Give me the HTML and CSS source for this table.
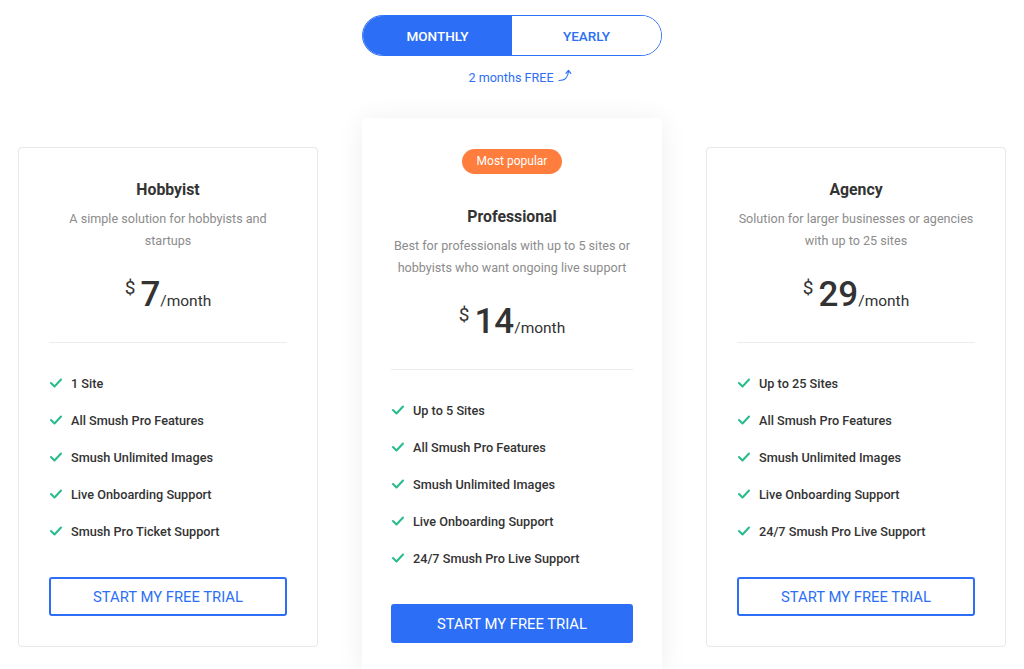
FILE: index.html
```html
<!DOCTYPE html>
<html lang="en">
<head>
<meta charset="utf-8">
<title>Pricing</title>
<link rel="stylesheet" href="styles.css">
</head>
<body>
<div class="page">
  <div class="toggle">
    <button class="toggle-btn active">MONTHLY</button>
    <button class="toggle-btn">YEARLY</button>
  </div>
  <div class="promo">2 months FREE
    <svg class="promo-arrow" width="14" height="13" viewBox="0 0 14 13" fill="none" stroke="#2c6ff6" stroke-width="1.2" stroke-linecap="round" stroke-linejoin="round"><path d="M1 11.5 C6 11.5 10 10 10.5 2"/><path d="M8 4.3 L10.5 1.5 L12.8 4.3"/></svg>
  </div>

  <div class="plans">
    <div class="card side">
      <h2 class="title">Hobbyist</h2>
      <p class="desc">A simple solution for hobbyists and startups</p>
      <div class="price"><span class="cur">$</span><span class="amt">7</span><span class="per">/month</span></div>
      <ul class="features">
        <li><svg class="check" viewBox="0 0 12 10"><polyline points="1,5 4.5,8.5 11,1.5"/></svg>1 Site</li>
        <li><svg class="check" viewBox="0 0 12 10"><polyline points="1,5 4.5,8.5 11,1.5"/></svg>All Smush Pro Features</li>
        <li><svg class="check" viewBox="0 0 12 10"><polyline points="1,5 4.5,8.5 11,1.5"/></svg>Smush Unlimited Images</li>
        <li><svg class="check" viewBox="0 0 12 10"><polyline points="1,5 4.5,8.5 11,1.5"/></svg>Live Onboarding Support</li>
        <li><svg class="check" viewBox="0 0 12 10"><polyline points="1,5 4.5,8.5 11,1.5"/></svg>Smush Pro Ticket Support</li>
      </ul>
      <button class="cta outline">START MY FREE TRIAL</button>
    </div>

    <div class="card featured">
      <span class="badge">Most popular</span>
      <h2 class="title">Professional</h2>
      <p class="desc">Best for professionals with up to 5 sites or hobbyists who want ongoing live support</p>
      <div class="price"><span class="cur">$</span><span class="amt">14</span><span class="per">/month</span></div>
      <ul class="features">
        <li><svg class="check" viewBox="0 0 12 10"><polyline points="1,5 4.5,8.5 11,1.5"/></svg>Up to 5 Sites</li>
        <li><svg class="check" viewBox="0 0 12 10"><polyline points="1,5 4.5,8.5 11,1.5"/></svg>All Smush Pro Features</li>
        <li><svg class="check" viewBox="0 0 12 10"><polyline points="1,5 4.5,8.5 11,1.5"/></svg>Smush Unlimited Images</li>
        <li><svg class="check" viewBox="0 0 12 10"><polyline points="1,5 4.5,8.5 11,1.5"/></svg>Live Onboarding Support</li>
        <li><svg class="check" viewBox="0 0 12 10"><polyline points="1,5 4.5,8.5 11,1.5"/></svg>24/7 Smush Pro Live Support</li>
      </ul>
      <button class="cta solid">START MY FREE TRIAL</button>
    </div>

    <div class="card side">
      <h2 class="title">Agency</h2>
      <p class="desc">Solution for larger businesses or agencies with up to 25 sites</p>
      <div class="price"><span class="cur">$</span><span class="amt">29</span><span class="per">/month</span></div>
      <ul class="features">
        <li><svg class="check" viewBox="0 0 12 10"><polyline points="1,5 4.5,8.5 11,1.5"/></svg>Up to 25 Sites</li>
        <li><svg class="check" viewBox="0 0 12 10"><polyline points="1,5 4.5,8.5 11,1.5"/></svg>All Smush Pro Features</li>
        <li><svg class="check" viewBox="0 0 12 10"><polyline points="1,5 4.5,8.5 11,1.5"/></svg>Smush Unlimited Images</li>
        <li><svg class="check" viewBox="0 0 12 10"><polyline points="1,5 4.5,8.5 11,1.5"/></svg>Live Onboarding Support</li>
        <li><svg class="check" viewBox="0 0 12 10"><polyline points="1,5 4.5,8.5 11,1.5"/></svg>24/7 Smush Pro Live Support</li>
      </ul>
      <button class="cta outline">START MY FREE TRIAL</button>
    </div>
  </div>
</div>
</body>
</html>
```

FILE: styles.css
```css
* { box-sizing: border-box; }
html, body { margin: 0; padding: 0; background: #fff; }
body {
  font-family: Roboto, "Liberation Sans", Arial, sans-serif;
  color: #333;
  overflow: hidden;
}
.page {
  display: flex;
  flex-direction: column;
  align-items: center;
  padding-top: 15px;
}
.toggle {
  display: flex;
  width: 300px;
  height: 41px;
  border: 1.5px solid #2c6ff6;
  border-radius: 21px;
  overflow: hidden;
}
.toggle-btn {
  flex: 1;
  border: 0;
  background: #fff;
  color: #2c6ff6;
  font-family: inherit;
  font-size: 13.5px;
  font-weight: 500;
  padding: 0;
  cursor: pointer;
}
.toggle-btn.active {
  background: #2c6ff6;
  color: #fff;
}
.promo {
  margin-top: 14px;
  height: 16px;
  font-size: 12.6px;
  line-height: 16px;
  color: #2c6ff6;
  display: flex;
  align-items: flex-end;
  gap: 4px;
  padding-left: 16px;
}
.promo-arrow { position: relative; top: -4px; }

.plans {
  display: flex;
  align-items: flex-start;
  gap: 44px;
  width: 988px;
  margin-top: 32px;
}
.card {
  width: 300px;
  flex: 0 0 300px;
  background: #fff;
  border-radius: 4px;
  display: flex;
  flex-direction: column;
  align-items: center;
  text-align: center;
}
.card.side {
  margin-top: 29px;
  border: 1px solid #e8e8e8;
  padding: 31px 30px 30px;
}
.card.featured {
  box-shadow: 0 2px 28px rgba(0, 0, 0, 0.07);
  padding: 31px 29px 31px;
}
.badge {
  display: inline-block;
  height: 25px;
  line-height: 25px;
  padding: 0 15px;
  border-radius: 13px;
  background: #ff7d3d;
  color: #fff;
  font-size: 12px;
  margin-bottom: 32px;
}
.title {
  margin: 0;
  font-size: 15.8px;
  line-height: 22px;
  font-weight: 700;
  color: #333;
}
.desc {
  margin: 7px -4px 0;
  font-size: 12.6px;
  line-height: 22px;
  color: #8c8c8c;
}
.price {
  margin-top: 23px;
  height: 40px;
  line-height: 40px;
  display: flex;
  justify-content: center;
  align-items: baseline;
  color: #333;
}
.cur {
  font-size: 19px;
  line-height: 19px;
  align-self: flex-start;
  margin-top: 3px;
  margin-right: 5px;
}
.amt {
  font-size: 35px;
  font-weight: 500;
}
.per {
  font-size: 15.5px;
  margin-left: 0;
}
.features {
  list-style: none;
  margin: 27px 0 0;
  padding: 30px 0 0;
  width: 100%;
  border-top: 1px solid #ececec;
  display: flex;
  flex-direction: column;
  gap: 17px;
  text-align: left;
}
.features li {
  display: flex;
  align-items: center;
  height: 20px;
  font-size: 12.7px;
  font-weight: 500;
  color: #333;
  padding-left: 1px;
}
.check {
  width: 12px;
  height: 10px;
  margin-right: 9px;
  fill: none;
  stroke: #27bb8d;
  stroke-width: 2;
  stroke-linecap: round;
  stroke-linejoin: round;
}
.cta {
  margin-top: 36px;
  width: 100%;
  height: 39px;
  border-radius: 3px;
  font-family: inherit;
  font-size: 14.8px;
  font-weight: 400;
  cursor: pointer;
}
.cta.outline {
  background: #fff;
  color: #2c6ff6;
  border: 2px solid #2c6ff6;
}
.cta.solid {
  background: #2c6ff6;
  color: #fff;
  border: 0;
}
```
